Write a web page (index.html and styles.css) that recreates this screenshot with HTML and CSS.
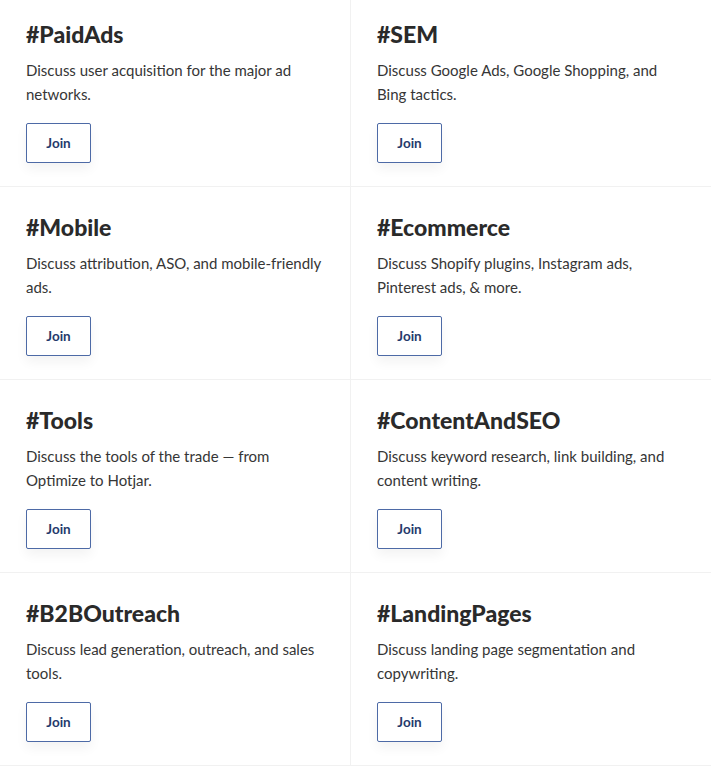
FILE: index.html
```html
<!DOCTYPE html>
<html lang="en">
<head>
<meta charset="utf-8">
<title>Channels</title>
<link rel="stylesheet" href="styles.css">
</head>
<body>
<div class="grid">
  <section class="card">
    <h2 class="title">#PaidAds</h2>
    <p class="desc">Discuss user acquisition for the major ad networks.</p>
    <button class="join">Join</button>
  </section>
  <section class="card">
    <h2 class="title">#SEM</h2>
    <p class="desc">Discuss Google Ads, Google Shopping, and Bing tactics.</p>
    <button class="join">Join</button>
  </section>
  <section class="card">
    <h2 class="title">#Mobile</h2>
    <p class="desc">Discuss attribution, ASO, and mobile-friendly ads.</p>
    <button class="join">Join</button>
  </section>
  <section class="card">
    <h2 class="title">#Ecommerce</h2>
    <p class="desc">Discuss Shopify plugins, Instagram ads, Pinterest ads, &amp; more.</p>
    <button class="join">Join</button>
  </section>
  <section class="card">
    <h2 class="title">#Tools</h2>
    <p class="desc">Discuss the tools of the trade — from Optimize to Hotjar.</p>
    <button class="join">Join</button>
  </section>
  <section class="card">
    <h2 class="title">#ContentAndSEO</h2>
    <p class="desc">Discuss keyword research, link building, and content writing.</p>
    <button class="join">Join</button>
  </section>
  <section class="card">
    <h2 class="title">#B2BOutreach</h2>
    <p class="desc">Discuss lead generation, outreach, and sales tools.</p>
    <button class="join">Join</button>
  </section>
  <section class="card">
    <h2 class="title">#LandingPages</h2>
    <p class="desc">Discuss landing page segmentation and copywriting.</p>
    <button class="join">Join</button>
  </section>
</div>
</body>
</html>
```
FILE: styles.css
```css
html, body {
  margin: 0;
  padding: 0;
  background: #ffffff;
}
body {
  font-family: "Lato", "Liberation Sans", sans-serif;
  color: #333333;
  overflow: hidden;
}
.grid {
  display: grid;
  grid-template-columns: 351px 1fr;
  margin-top: -6px;
}
.card {
  display: flex;
  flex-direction: column;
  align-items: flex-start;
  padding: 26px 25px 23px 26px;
  border-bottom: 1px solid #f1f1f1;
}
.card:nth-child(odd) {
  border-right: 1px solid #f1f1f1;
}
.title {
  margin: 0 0 10px;
  font-size: 23px;
  line-height: 28px;
  font-weight: 900;
  color: #2a2a2a;
}
.desc {
  margin: 0 0 17px;
  font-size: 15px;
  line-height: 24px;
  color: #363636;
  max-width: 300px;
}
.join {
  width: 65px;
  height: 40px;
  border: 1.5px solid #4d6aa6;
  border-radius: 2px;
  background: #ffffff;
  color: #253a6c;
  font-family: "Lato", "Liberation Sans", sans-serif;
  font-size: 13.5px;
  font-weight: 700;
  box-shadow: 0 6px 12px rgba(0, 0, 0, 0.05);
  padding: 0;
  cursor: pointer;
}
```
